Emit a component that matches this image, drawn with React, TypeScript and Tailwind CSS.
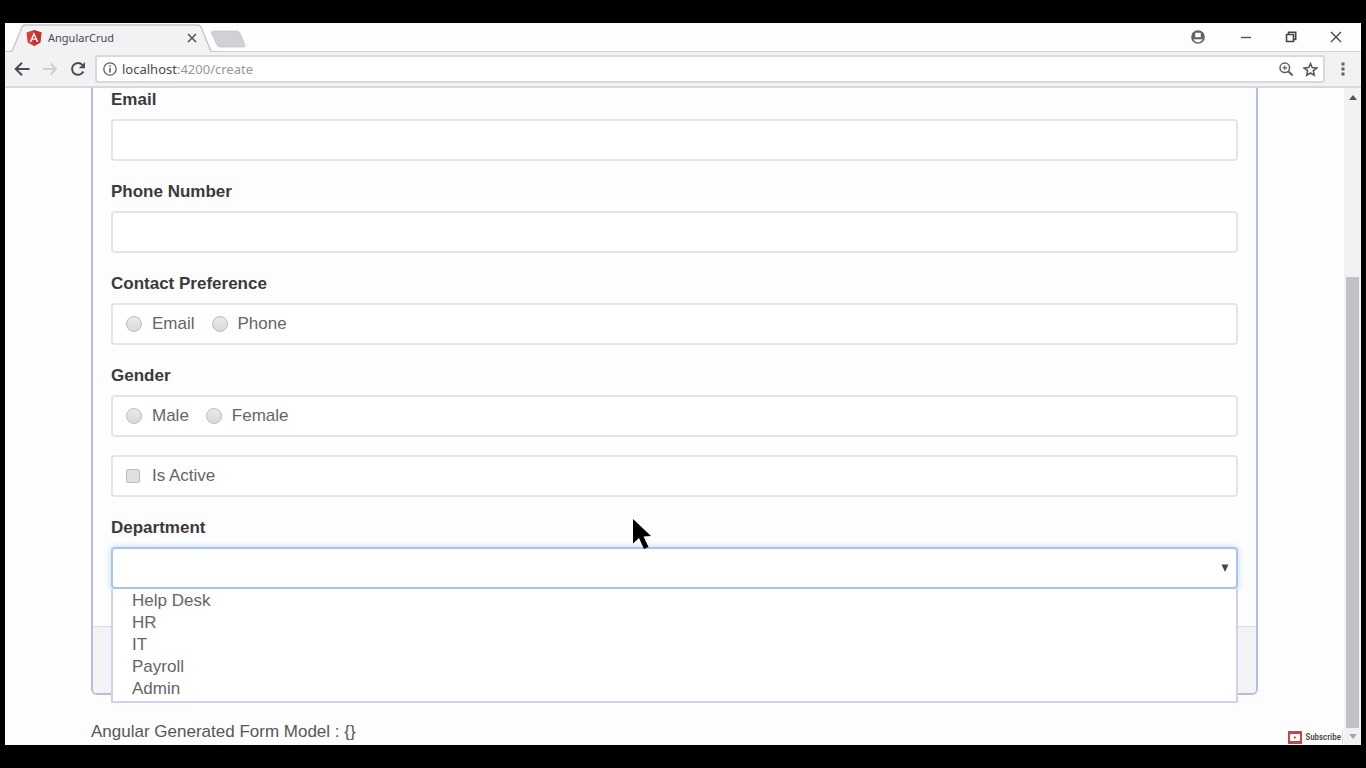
import { useState } from "react";

const departments = ["Help Desk", "HR", "IT", "Payroll", "Admin"];

const fieldBox =
  "h-[42px] w-full rounded border-2 border-[#e6e4e9] bg-white px-[13px] text-[#666468] outline-none";
const radioLook =
  "size-4 appearance-none rounded-full border border-[#bdbbbf] bg-linear-to-b from-[#e9e8ea] to-[#dad9dc] checked:bg-[#777]";

function TabStrip() {
  return (
    <header className="flex h-[29px] items-end border-b border-[#d4d2d7] bg-[#fdfdfd]">
      <div className="relative -mb-px flex h-[28px] w-[212px] shrink-0 items-center pl-[21px] pr-[20px]">
        <svg className="absolute inset-0 h-full w-full" viewBox="0 0 212 28" aria-hidden="true">
          <path d="M0 28 L5 28 Q7 27 8 25 L17 3 Q18 1 20 1 L193 1 Q195 1 196 3 L205 25 Q206 28 209 28 L212 28" fill="#f2f1f4" stroke="#c6c4c9" strokeWidth="1.3" />
        </svg>
        <svg className="relative size-4" viewBox="0 0 16 16" aria-hidden="true">
          <path d="M8 0 L15.5 2.6 L14.3 12.4 L8 16 L1.7 12.4 L0.5 2.6 Z" fill="#dd3b35" />
          <path d="M8 0 L15.5 2.6 L14.3 12.4 L8 16 Z" fill="#c0302f" />
          <path d="M8 2.3 L3.6 12 H5.3 L6.2 9.8 H9.8 L10.7 12 H12.4 Z M8 5.4 L9.3 8.5 H6.7 Z" fill="#fff" fillRule="evenodd" />
        </svg>
        <span className="relative ml-[6px] flex-1 text-[11px] leading-4 text-[#4b494d]">AngularCrud</span>
        <button type="button" aria-label="Close tab" className="relative">
          <svg className="size-[10px]" viewBox="0 0 10 10" fill="none" stroke="#555" strokeWidth="1.6">
            <path d="M1 1 L9 9 M9 1 L1 9" />
          </svg>
        </button>
      </div>
      <button type="button" aria-label="New tab" className="-ml-[7px] mb-[3px]">
        <svg className="h-[18px] w-[36px]" viewBox="0 0 36 18">
          <path d="M3 1 H27 Q29 1 30 3 L35 15 Q35.500 17 33.500 17 H10 Q8 17 7 15 L1.500 3 Q1 1 3 1 Z" fill="#d2d0d4" stroke="#c6c4c9" strokeWidth="0.8" />
        </svg>
      </button>
      <div className="ml-auto flex h-full items-center gap-[33px] pr-[19px]">
        <button type="button" aria-label="Profile" className="mr-[2px]">
          <svg className="size-[14px]" viewBox="0 0 14 14">
            <circle cx="7" cy="7" r="6" fill="none" stroke="#626064" strokeWidth="1.700" />
            <path d="M2 7.200 H12 V9.300 H2 Z" fill="#626064" />
            <path d="M1.500 3 L4.200 2 V7.500 H1 Z M12.500 3 L9.800 2 V7.500 H13 Z M4 1.200 H10 V2.800 H4 Z" fill="#626064" />
          </svg>
        </button>
        <button type="button" aria-label="Minimize">
          <svg className="size-[12px]" viewBox="0 0 12 12" stroke="#555" strokeWidth="1.4">
            <path d="M1 6.500 H11" />
          </svg>
        </button>
        <button type="button" aria-label="Restore">
          <svg className="size-[12px]" viewBox="0 0 12 12" fill="none" stroke="#454347" strokeWidth="1.6">
            <path d="M1.500 3.500 H8.500 V10.500 H1.500 Z M3.500 3.200 V1.300 H10.700 V8.500 H9" />
          </svg>
        </button>
        <button type="button" aria-label="Close window">
          <svg className="size-[12px]" viewBox="0 0 12 12" fill="none" stroke="#454347" strokeWidth="1.3">
            <path d="M1 1 L11 11 M11 1 L1 11" />
          </svg>
        </button>
      </div>
    </header>
  );
}

function Toolbar() {
  return (
    <nav className="relative z-10 flex h-[36px] items-center border-b-2 border-[#dad8dd] bg-[#f2f1f4] pl-[9px] pr-[16px]">
      <button type="button" aria-label="Back">
        <svg className="size-[16px]" viewBox="0 0 16 16" fill="none" stroke="#4e4c50" strokeWidth="2">
          <path d="M15.500 8 H2 M8 1.700 L1.700 8 L8 14.300" />
        </svg>
      </button>
      <button type="button" aria-label="Forward" className="ml-[12px]">
        <svg className="size-[16px]" viewBox="0 0 16 16" fill="none" stroke="#d0ced2" strokeWidth="1.8">
          <path d="M1 8 H14 M8.500 2.500 L14 8 L8.500 13.500" />
        </svg>
      </button>
      <button type="button" aria-label="Reload" className="ml-[12px]">
        <svg className="size-[16px]" viewBox="0 0 16 16">
          <path d="M13.300 10.500 A5.900 5.900 0 1 1 12.300 3.900" fill="none" stroke="#4e4c50" strokeWidth="2" />
          <path d="M15 1 V7.200 H8.800 Z" fill="#4e4c50" />
        </svg>
      </button>
      <div className="ml-[9px] flex h-[28px] flex-1 items-center rounded-[3px] border-2 border-[#dad8dd] bg-white px-[6px]">
        <svg className="size-[14px] shrink-0" viewBox="0 0 14 14" aria-hidden="true">
          <circle cx="7" cy="7" r="6.200" fill="none" stroke="#605e62" strokeWidth="1.300" />
          <path d="M7 6 V10.500 M7 3.200 V4.800" stroke="#605e62" strokeWidth="1.600" />
        </svg>
        <a href="#create" className="ml-[5px] flex-1 text-[13px] leading-5 text-[#98969a]">
          <span className="text-[#4b494d]">localhost</span>:4200/create
        </a>
        <button type="button" aria-label="Zoom">
          <svg className="size-[14px]" viewBox="0 0 14 14" fill="none" stroke="#626064" strokeWidth="1.500">
            <circle cx="5.800" cy="5.800" r="4.800" />
            <path d="M9.300 9.300 L13.500 13.500" strokeWidth="2" />
            <path d="M3.500 5.800 H8.100 M5.800 3.500 V8.100" strokeWidth="1.200" />
          </svg>
        </button>
        <button type="button" aria-label="Bookmark" className="ml-[10px] -mr-[1px]">
          <svg className="size-[15px]" viewBox="0 0 15 15" fill="none" stroke="#555357" strokeWidth="1.500">
            <path d="M7.500 1.500 L9.200 5.600 L13.700 6 L10.300 8.900 L11.300 13.300 L7.500 11 L3.700 13.300 L4.700 8.900 L1.300 6 L5.800 5.600 Z" />
          </svg>
        </button>
      </div>
      <button type="button" aria-label="Menu" className="ml-[16px]">
        <svg className="h-[14px] w-[4px]" viewBox="0 0 4 14" fill="#626064">
          <rect x="0.500" y="0.500" width="3" height="3" />
          <rect x="0.500" y="5.500" width="3" height="3" />
          <rect x="0.500" y="10.500" width="3" height="3" />
        </svg>
      </button>
    </nav>
  );
}

function TextField({ id, label }: { id: string; label: string }) {
  return (
    <div className="mb-[18px]">
      <label htmlFor={id} className="mb-[6px] block font-bold text-[#3b393d]">{label}</label>
      <input id={id} type="text" className={`block ${fieldBox}`} />
    </div>
  );
}

function RadioField({ name, label, options }: { name: string; label: string; options: string[] }) {
  return (
    <fieldset className="mb-[18px]">
      <legend className="mb-[6px] block font-bold text-[#3b393d]">{label}</legend>
      <div className={`flex items-center gap-[17px] ${fieldBox}`}>
        {options.map((option) => (
          <label key={option} className="flex items-center gap-[10px]">
            <input type="radio" name={name} className={radioLook} />
            {option}
          </label>
        ))}
      </div>
    </fieldset>
  );
}

function DepartmentField() {
  const [value, setValue] = useState("");
  return (
    <div className="mb-[18px]">
      <label htmlFor="department" className="mb-[6px] block font-bold text-[#3b393d]">Department</label>
      <div className="relative">
        <select
          id="department"
          value={value}
          onChange={(event) => setValue(event.target.value)}
          className="block h-[42px] w-full appearance-none rounded border-2 border-[#a9c3ee] bg-white px-[14px] text-[#666468] shadow-[0_0_7px_#bcd8fb] outline-none"
        >
          <option value=""></option>
          {departments.map((department) => (
            <option key={department}>{department}</option>
          ))}
        </select>
        <svg className="pointer-events-none absolute right-[9px] top-[17px] h-[8px] w-[8px]" viewBox="0 0 8 8" aria-hidden="true">
          <path d="M0.500 0.500 H7.500 L4 8 Z" fill="#48464a" />
        </svg>
        <ul role="listbox" aria-label="Department" className="absolute inset-x-0 top-full z-10 border-2 border-t-0 border-[#d4cfec] bg-white pb-px pt-px leading-[22px] text-[#666468]">
          {departments.map((department) => (
            <li key={department} role="option" aria-selected={department === value} onClick={() => setValue(department)} className="px-[19px]">
              {department}
            </li>
          ))}
        </ul>
      </div>
    </div>
  );
}

function Scrollbar() {
  return (
    <div className="flex w-[17px] shrink-0 flex-col items-center bg-[#f2f1f4]" aria-hidden="true">
      <svg className="my-[7px] h-[5px] w-[8px]" viewBox="0 0 8 5"><path d="M4 0 L8 5 H0 Z" fill="#555357" /></svg>
      <div className="basis-[170px]" />
      <div className="w-[13px] grow bg-[#c2c0c4]" />
      <svg className="my-[6px] h-[5px] w-[8px]" viewBox="0 0 8 5"><path d="M4 5 L8 0 H0 Z" fill="#a9a7ab" /></svg>
    </div>
  );
}

export default function App() {
  return (
    <div className="flex min-h-screen flex-col bg-black px-[5px] py-[23px] font-['Noto_Sans',sans-serif]">
      <div className="flex grow flex-col bg-[#fdfdfd]">
        <TabStrip />
        <Toolbar />
        <div className="flex grow overflow-hidden">
          <main className="relative flex-1 px-[86px] font-['Liberation_Sans',Arial,sans-serif] text-[17px] leading-[26px]">
            <form className="-mt-px rounded-b-md border-2 border-t-0 border-[#b4bfe0]">
              <div className="px-[18px] pb-px">
                <TextField id="email" label="Email" />
                <TextField id="phone" label="Phone Number" />
                <RadioField name="contact" label="Contact Preference" options={["Email", "Phone"]} />
                <RadioField name="gender" label="Gender" options={["Male", "Female"]} />
                <div className={`mb-[18px] flex items-center ${fieldBox}`}>
                  <label className="flex items-center gap-[12px]">
                    <input type="checkbox" className="size-[14px] appearance-none rounded-[2px] border border-[#bdbbbf] bg-[#e0dfe1] checked:bg-[#777]" />
                    Is Active
                  </label>
                </div>
                <DepartmentField />
              </div>
              <footer className="mt-[18px] h-[67px] rounded-b border-t border-[#dddbe0] bg-[#f3f2f5]" />
            </form>
            <p className="mt-[24px] text-[#58565a]">Angular Generated Form Model : {"{}"}</p>
            <a href="#subscribe" className="absolute bottom-[1px] right-[1px] flex h-[14px] items-center gap-[3px] border-r border-[#d8d6da] pr-px font-['Roboto_Condensed','Liberation_Sans',sans-serif] text-[9px] font-medium leading-[14px] text-[#454347]">
              <svg className="h-[13px] w-[14px]" viewBox="0 0 14 13" aria-hidden="true">
                <rect width="14" height="13" fill="#cf4249" />
                <rect x="2" y="3" width="10" height="7" rx="1" fill="#fff" />
                <path d="M6 5 L8.500 6.500 L6 8 Z" fill="#cf4249" />
              </svg>
              Subscribe
            </a>
            <svg className="pointer-events-none absolute left-[627px] top-[430px] h-[33px] w-[20px]" viewBox="0 0 20 33" aria-hidden="true">
              <path d="M1 1 V25.500 L7 20 L12 31 L16.500 29 L11.500 18.500 L19 18 Z" fill="#000" />
            </svg>
          </main>
          <Scrollbar />
        </div>
      </div>
    </div>
  );
}
